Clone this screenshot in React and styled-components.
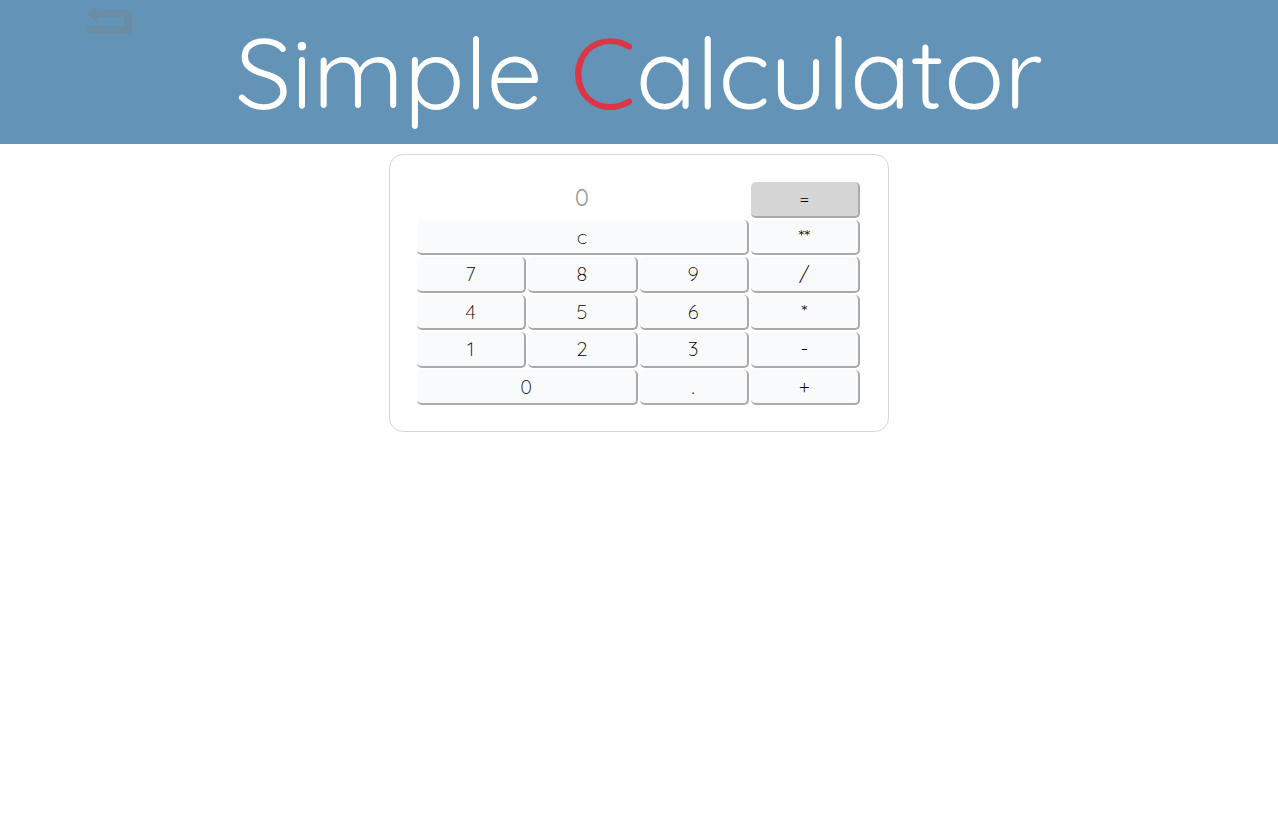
import React, { useState } from "react";
import styled, { createGlobalStyle } from "styled-components";

const GlobalStyle = createGlobalStyle`
  *, *::before, *::after { box-sizing: border-box; }
  body {
    margin: 0;
    background: #fff;
    font-family: Quicksand, Lato, "Open Sans", sans-serif;
  }
`;

const Header = styled.header`
  position: relative;
  display: flex;
  justify-content: center;
  height: 144px;
  background: #6394b8;
`;

const BackLink = styled.a`
  position: absolute;
  top: 5px;
  left: 87px;
  color: #688da5;
  line-height: 0;
`;

const Title = styled.h1`
  margin: 0;
  color: #fff;
  font-size: 100px;
  font-weight: 400;
  line-height: 144px;
  white-space: nowrap;
`;

const Accent = styled.span`
  color: #dc3545;
`;

const Card = styled.main`
  width: 100%;
  max-width: 500px;
  margin: 10px auto;
  padding: 27px 28px 26px 27px;
  border: 1px solid #d6d6d6;
  border-radius: 14px;
`;

const Keypad = styled.form`
  display: grid;
  grid-template-columns: repeat(4, minmax(0, 1fr));
  grid-template-rows: repeat(6, minmax(0, 1fr));
  gap: 2px;
  height: 223px;
`;

const Display = styled.input`
  grid-column: span 3;
  min-width: 0;
  min-height: 0;
  padding: 0 2px 6px 0;
  border: 0;
  outline: 0;
  background: transparent;
  color: #212529;
  font: 400 24px Quicksand, "Open Sans", sans-serif;
  text-align: center;

  &::placeholder {
    color: #999;
    opacity: 1;
  }
`;

const Key = styled.button`
  grid-column: span ${({ $span }) => $span || 1};
  min-width: 0;
  min-height: 0;
  padding: 1px 0 0;
  border: 0 solid #aaa;
  border-right-width: 2px;
  border-bottom-width: 2px;
  border-radius: 5px;
  background: ${({ $strong }) => ($strong ? "#d6d6d6" : "#f9fafc")};
  color: #000;
  font: 300 20px Quicksand, "Open Sans", sans-serif;
  line-height: 24px;
  cursor: pointer;
`;

const keys = [
  { label: "c", span: 3 },
  { label: "**" },
  { label: "7" },
  { label: "8" },
  { label: "9" },
  { label: "/" },
  { label: "4" },
  { label: "5" },
  { label: "6" },
  { label: "*" },
  { label: "1" },
  { label: "2" },
  { label: "3" },
  { label: "-" },
  { label: "0", span: 2 },
  { label: "." },
  { label: "+" },
];

function BackIcon() {
  return (
    <svg width="45" height="29" viewBox="0 0 45 29" fill="currentColor" aria-hidden="true">
      <path d="M0 9 10 0v5h31a4 4 0 0 1 4 4v16a4 4 0 0 1-4 4H0v-8h37v-9H10v6z" />
    </svg>
  );
}

export default function App() {
  const [value, setValue] = useState("");
  const press = (label) => setValue(label === "c" ? "" : value + label);

  return (
    <>
      <GlobalStyle />
      <Header>
        <BackLink href="#" aria-label="Back">
          <BackIcon />
        </BackLink>
        <Title>
          Simple <Accent>C</Accent>alculator
        </Title>
      </Header>
      <Card>
        <Keypad onSubmit={(event) => event.preventDefault()}>
          <Display
            aria-label="Expression"
            placeholder="0"
            value={value}
            onChange={(event) => setValue(event.target.value)}
          />
          <Key type="submit" $strong>=</Key>
          {keys.map(({ label, span }) => (
            <Key key={label} type="button" $span={span} onClick={() => press(label)}>
              {label}
            </Key>
          ))}
        </Keypad>
      </Card>
    </>
  );
}
